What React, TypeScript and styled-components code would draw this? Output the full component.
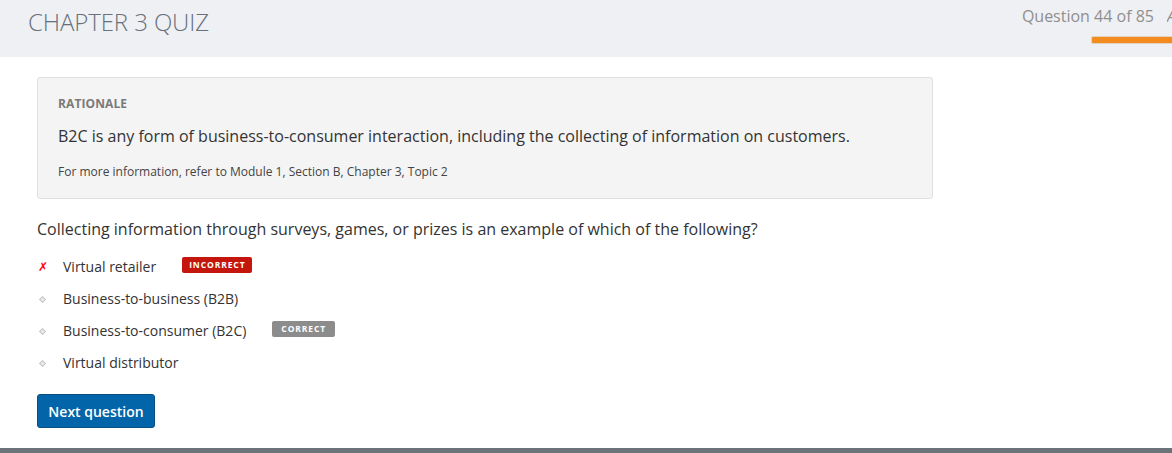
import React from "react";
import styled, { createGlobalStyle } from "styled-components";

const Global = createGlobalStyle`
  html, body { margin: 0; padding: 0; background: #fff; overflow: hidden; }
  body { font-family: "Open Sans", "Liberation Sans", sans-serif; color: #333; }
  * { box-sizing: border-box; }
`;

const Page = styled.div`
  width: 1172px;
  height: 453px;
  display: flex;
  flex-direction: column;
  overflow: hidden;
`;

const Header = styled.header`
  height: 57px;
  background: #eff0f3;
  display: flex;
  justify-content: space-between;
  align-items: flex-start;
  padding: 5px 0 0 28px;
  flex-shrink: 0;
`;

const Title = styled.h1`
  margin: 0;
  font-size: 24px;
  font-weight: 300;
  color: #67717b;
  line-height: 33px;
  letter-spacing: -0.1px;
`;

const Progress = styled.div`
  display: flex;
  flex-direction: column;
  align-items: flex-end;
  white-space: nowrap;
`;

const ProgressTop = styled.div`
  display: flex;
  gap: 13px;
  font-size: 16px;
  line-height: 22px;
  color: #8f8f8f;
  margin-right: -1px;
`;

const Cut = styled.span`
  font-style: italic;
  width: 6px;
  overflow: hidden;
  display: inline-block;
`;

const Bar = styled.div`
  width: 81px;
  height: 8px;
  margin-top: 9px;
  background: #f28c1e;
  border: 1px solid #e2d2bf;
  border-right: none;
  border-radius: 2px 0 0 2px;
`;

const Main = styled.main`
  padding: 20px 0 0 37px;
  flex: 1;
`;

const Rationale = styled.section`
  width: 896px;
  background: #f4f4f4;
  border: 1px solid #e0e0e0;
  border-radius: 3px;
  padding: 18px 20px 18px 20px;
`;

const Label = styled.div`
  font-size: 12px;
  font-weight: 700;
  color: #7a7a7a;
  line-height: 16px;
  letter-spacing: 0.1px;
`;

const RationaleText = styled.p`
  margin: 13px 0 0;
  font-size: 16px;
  line-height: 22px;
  color: #333;
`;

const Ref = styled.p`
  margin: 17px 0 0;
  font-size: 12px;
  line-height: 16px;
  color: #444;
`;

const Question = styled.p`
  margin: 19px 0 0;
  font-size: 16px;
  line-height: 22px;
  color: #333;
`;

const Options = styled.ul`
  list-style: none;
  margin: 17px 0 0;
  padding: 0;
  display: flex;
  flex-direction: column;
  gap: 13px;
`;

const Option = styled.li`
  display: flex;
  align-items: center;
  height: 19px;
  font-size: 14px;
  line-height: 19px;
  color: #333;
`;

const Marker = styled.span`
  width: 26px;
  display: flex;
  align-items: center;
  padding-left: 1px;
`;

const CrossMark = styled.span`
  font-family: "DejaVu Sans", sans-serif;
  font-size: 12px;
  line-height: 12px;
  color: #f00;
  margin-top: 1px;
`;

const Diamond = styled.span`
  width: 5px;
  height: 5px;
  margin-left: 2px;
  margin-top: 1px;
  border: 1px solid #c4c4c4;
  background: #eee;
  transform: rotate(45deg);
`;

const Badge = styled.span<{ $tone: "bad" | "good" }>`
  margin-left: 26px;
  height: 16px;
  padding: 0 ${(p) => (p.$tone === "bad" ? "7px" : "9px")};
  border-radius: 2px;
  background: ${(p) => (p.$tone === "bad" ? "#c4160d" : "#8c8c8c")};
  color: #fff;
  font-size: 8.5px;
  font-weight: 700;
  letter-spacing: 0.9px;
  line-height: 16px;
  margin-top: -3px;
`;

const NextButton = styled.button`
  margin-top: 22px;
  height: 34px;
  width: 118px;
  background: #0265a9;
  border: 1px solid #0a4f80;
  border-radius: 3px;
  color: #fff;
  font-family: "Open Sans", "Liberation Sans", sans-serif;
  font-size: 14px;
  font-weight: 600;
  padding: 0;
`;

const Footer = styled.div`
  height: 5px;
  background: #6b747b;
  flex-shrink: 0;
`;

type Opt = { text: string; mark?: "x"; badge?: "bad" | "good" };
const options: Opt[] = [
  { text: "Virtual retailer", mark: "x", badge: "bad" },
  { text: "Business-to-business (B2B)" },
  { text: "Business-to-consumer (B2C)", badge: "good" },
  { text: "Virtual distributor" },
];

export default function App() {
  return (
    <Page>
      <Global />
      <Header>
        <Title>CHAPTER 3 QUIZ</Title>
        <Progress>
          <ProgressTop>
            <span>Question 44 of 85</span>
            <Cut>A</Cut>
          </ProgressTop>
          <Bar />
        </Progress>
      </Header>
      <Main>
        <Rationale>
          <Label>RATIONALE</Label>
          <RationaleText>
            B2C is any form of business-to-consumer interaction, including the collecting of information on customers.
          </RationaleText>
          <Ref>For more information, refer to Module 1, Section B, Chapter 3, Topic 2</Ref>
        </Rationale>
        <Question>
          Collecting information through surveys, games, or prizes is an example of which of the following?
        </Question>
        <Options>
          {options.map((o) => (
            <Option key={o.text}>
              <Marker>{o.mark === "x" ? <CrossMark>✗</CrossMark> : <Diamond />}</Marker>
              <span>{o.text}</span>
              {o.badge && <Badge $tone={o.badge}>{o.badge === "bad" ? "INCORRECT" : "CORRECT"}</Badge>}
            </Option>
          ))}
        </Options>
        <NextButton>Next question</NextButton>
      </Main>
      <Footer />
    </Page>
  );
}
